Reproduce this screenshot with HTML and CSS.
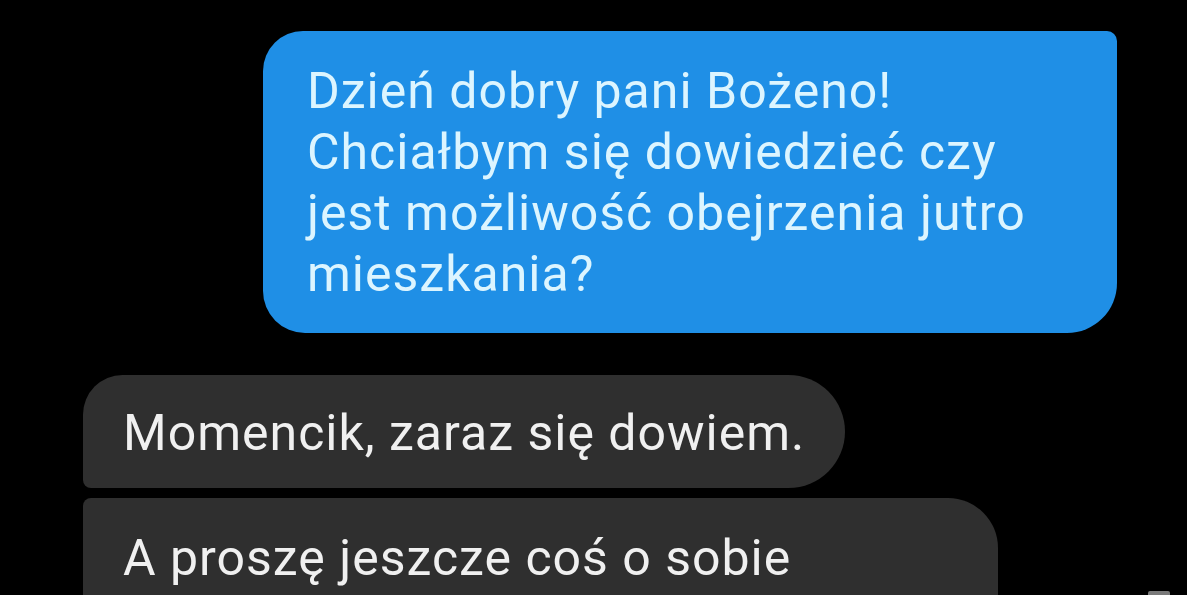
FILE: index.html
```html
<!DOCTYPE html>
<html lang="pl">
<head>
    <meta charset="UTF-8">
    <meta name="viewport" content="width=device-width, initial-scale=1.0">
    <title>Wiadomości</title>
    <link rel="stylesheet" href="styles.css">
</head>
<body>
    <div class="chat">
        <div class="row row-out">
            <div class="bubble bubble-out">Dzień dobry pani Bożeno!<br>Chciałbym się dowiedzieć czy<br>jest możliwość obejrzenia jutro<br>mieszkania?</div>
        </div>

        <div class="row row-in">
            <div class="bubble bubble-in bubble-first">Momencik, zaraz się dowiem.</div>
        </div>
        <div class="row row-in">
            <div class="bubble bubble-in bubble-next">A proszę jeszcze coś o sobie</div>
        </div>
    </div>

    <div class="scroll-mark"></div>
</body>
</html>
```

FILE: styles.css
```css
html, body {
    height: 100%;
}

body {
    margin: 0;
    background: #000;
    font-family: 'Roboto', 'Liberation Sans', sans-serif;
    overflow: hidden;
    position: relative;
}

.chat {
    display: flex;
    flex-direction: column;
    padding-top: 31px;
}

.row {
    display: flex;
}

.row-out {
    justify-content: flex-end;
    padding-right: 70px;
    margin-bottom: 42px;
}

.row-in {
    padding-left: 83px;
    margin-bottom: 10px;
}

.bubble {
    font-size: 50px;
    line-height: 61px;
    letter-spacing: 1px;
    box-sizing: border-box;
    white-space: nowrap;
}

.bubble-out {
    width: 854px;
    padding: 30px 40px 28px 44px;
    background: #1f8fe6;
    color: #dcf5ff;
    border-radius: 40px 10px 50px 42px;
}

.bubble-in {
    background: #2f2f2f;
    color: #f0f0f0;
    padding: 28px 40px 24px 40px;
}

.bubble-first {
    width: 762px;
    border-radius: 40px 57px 57px 8px;
}

.bubble-next {
    width: 915px;
    height: 200px;
    padding-top: 30px;
    border-radius: 8px 50px 50px 40px;
}

.scroll-mark {
    position: absolute;
    right: 17px;
    bottom: -2px;
    width: 22px;
    height: 6px;
    border-radius: 2px;
    background: #7a7a7a;
}
```
